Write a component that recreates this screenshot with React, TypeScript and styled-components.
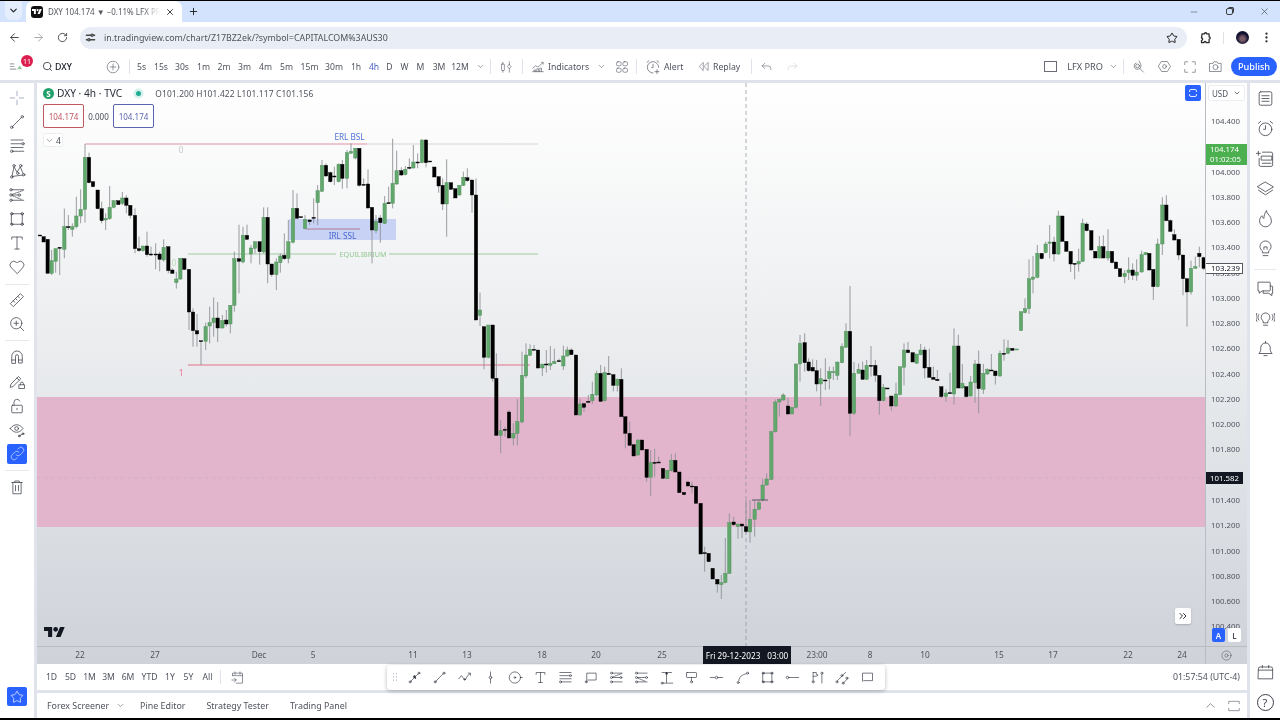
import { FC, ReactNode } from "react";
import styled, { createGlobalStyle } from "styled-components";
import {
  ArrowLeft,
  ArrowRight,
  ChevronDown,
  ChevronUp,
  ChevronsRight,
  EllipsisVertical,
  Minus,
  Plus,
  RotateCw,
  Search,
  Star,
  X,
} from "lucide-react";

const UI_FONT = `"Noto Sans", "Open Sans", sans-serif`;

type Row = number[];

// candles read off the reference at 3x: [x, wickTop, bodyTop, bodyBottom, wickBottom, up]
const seg1: Row[] = [
  [0, 315, 315, 318, 318, 0], [11, 320, 320, 336, 336, 0], [23, 328, 328, 430, 430, 0], [35, 360, 392, 430, 435, 1],
  [47, 356, 356, 394, 428, 1], [59, 352, 352, 354, 435, 0], [73, 236, 290, 358, 385, 1], [85, 255, 290, 293, 300, 0],
  [97, 280, 290, 298, 320, 1], [109, 200, 258, 290, 295, 1], [122, 178, 238, 258, 280, 1], [135, 42, 82, 238, 278, 1],
  [147, 68, 82, 158, 160, 0], [159, 155, 155, 170, 172, 0], [173, 180, 180, 236, 238, 0], [185, 215, 236, 272, 280, 0],
  [197, 250, 265, 270, 300, 1], [209, 168, 232, 266, 270, 1], [221, 212, 212, 232, 235, 1], [235, 212, 212, 224, 224, 0],
  [247, 186, 204, 220, 225, 1], [259, 196, 204, 226, 250, 0], [271, 226, 226, 256, 265, 0], [285, 235, 256, 356, 370, 0],
  [297, 320, 356, 362, 365, 0], [309, 348, 348, 362, 365, 1], [321, 305, 348, 374, 380, 0], [333, 350, 372, 374, 378, 0],
  [347, 340, 372, 373, 418, 0], [359, 365, 372, 388, 424, 0], [371, 328, 352, 390, 395, 1], [385, 350, 350, 422, 430, 0],
  [397, 415, 420, 430, 432, 0], [409, 425, 447, 458, 476, 1], [421, 385, 385, 447, 450, 1], [433, 386, 386, 418, 420, 0],
  [447, 418, 418, 546, 600, 0], [459, 535, 546, 602, 650, 0], [471, 552, 602, 612, 650, 0], [483, 632, 632, 633, 705, 0],
  [497, 578, 590, 634, 660, 1], [509, 530, 578, 588, 640, 1], [521, 502, 564, 578, 620, 1], [533, 516, 564, 594, 636, 0],
  [547, 555, 572, 594, 596, 1], [559, 540, 570, 582, 590, 0], [571, 526, 526, 582, 610, 1], [583, 365, 386, 526, 545, 1],
  [597, 284, 386, 394, 490, 0], [609, 290, 316, 396, 400, 1], [621, 284, 316, 328, 330, 0], [633, 345, 354, 372, 400, 1],
  [645, 335, 335, 355, 370, 1], [659, 335, 335, 365, 404, 0], [671, 232, 262, 366, 370, 1], [683, 232, 262, 402, 460, 0],
  [695, 402, 402, 434, 440, 0], [709, 385, 396, 434, 480, 1], [721, 370, 378, 398, 428, 1], [733, 310, 376, 386, 390, 0],
  [745, 270, 335, 385, 400, 1],
];
const seg2: Row[] = [
  [39, 180, 235, 337, 340, 1], [51, 190, 235, 265, 265, 0], [63, 260, 260, 263, 263, 0], [75, 255, 268, 296, 298, 1],
  [89, 268, 270, 275, 285, 0], [101, 205, 262, 263, 280, 0], [113, 165, 182, 218, 285, 1], [126, 90, 106, 184, 186, 1],
  [138, 100, 106, 138, 140, 0], [151, 125, 128, 155, 158, 0], [163, 110, 138, 139, 165, 0], [176, 100, 103, 155, 157, 1],
  [187, 90, 103, 145, 176, 0], [201, 60, 68, 145, 175, 1], [213, 40, 64, 70, 70, 1], [226, 55, 55, 84, 88, 1],
  [238, 55, 55, 166, 170, 0], [251, 145, 163, 165, 165, 0], [264, 118, 162, 234, 235, 0], [276, 232, 232, 300, 400, 0],
  [288, 255, 274, 302, 310, 1], [301, 255, 264, 278, 338, 0], [314, 198, 220, 280, 282, 1], [326, 170, 218, 219, 220, 0],
  [338, 26, 160, 220, 235, 1], [350, 62, 122, 162, 165, 1], [364, 112, 122, 135, 138, 0], [376, 108, 118, 134, 136, 1],
  [388, 85, 112, 115, 118, 0], [400, 45, 96, 114, 116, 1], [413, 70, 96, 97, 115, 0], [426, 28, 30, 98, 100, 1],
  [438, 28, 30, 98, 112, 0], [450, 93, 93, 95, 95, 0], [463, 111, 111, 141, 142, 0], [476, 140, 140, 168, 188, 0],
  [488, 145, 166, 222, 240, 0], [500, 88, 158, 222, 320, 1], [513, 158, 158, 178, 180, 0], [526, 176, 176, 204, 204, 0],
  [538, 166, 166, 195, 197, 1], [550, 125, 142, 166, 168, 1], [562, 115, 143, 152, 155, 0], [576, 150, 150, 195, 248, 0],
  [588, 145, 195, 570, 570, 0], [600, 488, 540, 556, 588, 1], [612, 590, 590, 682, 718, 0], [625, 585, 585, 682, 685, 1],
  [638, 585, 585, 745, 755, 0],
];
const seg3: Row[] = [
  [79, 160, 235, 406, 408, 0], [92, 360, 392, 406, 460, 1], [105, 380, 388, 390, 410, 0], [117, 330, 336, 414, 416, 0],
  [130, 370, 400, 414, 436, 1], [142, 297, 365, 400, 436, 1], [156, 155, 226, 366, 370, 1], [168, 130, 165, 228, 235, 1],
  [180, 133, 148, 166, 168, 1], [192, 135, 148, 149, 150, 0], [204, 150, 150, 204, 206, 0], [217, 190, 193, 204, 228, 1],
  [229, 150, 192, 194, 218, 0], [241, 138, 190, 196, 210, 1], [253, 146, 184, 191, 191, 1], [267, 176, 182, 184, 185, 0],
  [280, 137, 168, 198, 210, 1], [292, 140, 150, 168, 170, 1], [304, 145, 150, 164, 165, 0], [318, 165, 165, 345, 345, 0],
  [330, 295, 312, 345, 348, 1], [342, 310, 311, 322, 335, 0], [355, 285, 304, 306, 310, 0], [367, 245, 283, 302, 312, 1],
  [380, 212, 220, 285, 290, 1], [392, 195, 220, 304, 306, 0], [404, 200, 218, 302, 305, 1], [416, 168, 220, 224, 225, 0],
  [430, 224, 224, 256, 274, 0], [442, 235, 238, 256, 275, 1], [454, 205, 238, 350, 352, 0], [466, 350, 350, 400, 445, 0],
  [479, 365, 400, 436, 438, 0], [491, 434, 434, 468, 468, 0], [504, 418, 420, 465, 468, 1], [516, 420, 420, 450, 450, 0],
  [530, 448, 448, 532, 545, 0], [542, 450, 488, 532, 588, 1], [554, 446, 487, 489, 530, 0], [566, 470, 486, 488, 490, 0],
  [579, 505, 505, 535, 537, 0], [592, 511, 511, 536, 537, 1], [604, 462, 481, 512, 515, 1], [616, 460, 481, 516, 518, 0],
  [628, 516, 516, 578, 578, 0], [642, 577, 577, 584, 584, 0], [654, 545, 546, 558, 560, 0], [666, 545, 558, 559, 580, 0],
  [678, 559, 559, 610, 610, 0], [692, 610, 610, 762, 762, 0], [704, 740, 758, 759, 815, 0], [716, 760, 760, 785, 785, 0],
  [728, 805, 805, 837, 837, 0], [742, 838, 838, 852, 878, 0], [754, 825, 848, 854, 897, 1], [766, 714, 820, 848, 850, 1],
  [778, 640, 668, 820, 822, 1], [791, 650, 666, 674, 678, 0], [804, 672, 672, 680, 716, 1], [816, 672, 672, 678, 714, 0],
  [828, 600, 680, 695, 700, 0], [840, 600, 658, 696, 728, 1], [854, 600, 628, 658, 710, 1], [867, 600, 608, 628, 630, 1],
  [878, 535, 555, 600, 605, 1], [890, 520, 537, 555, 558, 1],
];
const seg4: Row[] = [
  [34, 725, 725, 868, 870, 1], [46, 628, 636, 725, 728, 1], [58, 625, 628, 636, 680, 1], [70, 610, 615, 630, 632, 1],
  [84, 624, 648, 672, 674, 0], [96, 652, 652, 672, 672, 1], [108, 520, 522, 652, 656, 1], [120, 435, 460, 522, 575, 1],
  [134, 430, 458, 518, 545, 0], [146, 505, 516, 542, 545, 0], [158, 508, 532, 543, 545, 0], [170, 510, 542, 582, 604, 0],
  [182, 535, 566, 582, 648, 1], [196, 505, 570, 571, 600, 0], [208, 530, 545, 566, 598, 1], [220, 530, 545, 546, 570, 1],
  [232, 516, 516, 556, 570, 1], [246, 460, 470, 518, 520, 1], [258, 400, 424, 472, 474, 1], [270, 288, 424, 670, 738, 0],
  [282, 516, 550, 670, 675, 1], [296, 520, 538, 550, 550, 1], [308, 515, 540, 568, 570, 0], [320, 510, 526, 568, 570, 1],
  [333, 468, 526, 527, 560, 0], [346, 510, 526, 556, 575, 0], [358, 556, 556, 632, 674, 0], [370, 582, 592, 632, 634, 1],
  [382, 594, 594, 597, 597, 0], [394, 618, 618, 648, 662, 0], [408, 578, 612, 648, 650, 1], [420, 530, 530, 614, 616, 1],
  [432, 460, 480, 532, 586, 1], [444, 456, 480, 488, 490, 0], [458, 488, 488, 516, 516, 0], [470, 492, 492, 520, 520, 1],
  [482, 462, 480, 494, 496, 1], [494, 470, 480, 534, 565, 0], [508, 476, 532, 562, 564, 0], [520, 530, 562, 568, 568, 0],
  [532, 540, 568, 572, 572, 0], [544, 590, 590, 620, 624, 0], [558, 598, 609, 620, 635, 1], [570, 548, 608, 610, 612, 0],
  [582, 415, 468, 612, 644, 1], [595, 434, 468, 594, 596, 0], [607, 522, 580, 594, 596, 1], [619, 590, 590, 620, 624, 0],
  [632, 558, 576, 618, 620, 1], [645, 510, 522, 578, 638, 1], [656, 482, 522, 596, 670, 0], [670, 522, 550, 598, 612, 1],
  [682, 535, 538, 552, 555, 1], [694, 492, 540, 542, 542, 0], [706, 543, 543, 557, 584, 0], [720, 482, 490, 558, 560, 1],
  [732, 448, 490, 491, 512, 0], [744, 450, 474, 490, 492, 1], [757, 475, 475, 481, 481, 0], [770, 477, 477, 480, 480, 1],
  [783, 365, 365, 422, 422, 1], [795, 325, 356, 368, 370, 1], [807, 208, 266, 356, 372, 1], [819, 198, 261, 268, 310, 1],
  [832, 165, 190, 262, 265, 1], [845, 190, 190, 206, 208, 0], [857, 155, 162, 188, 190, 1], [869, 105, 156, 160, 205, 1],
  [882, 140, 156, 192, 214, 0], [895, 62, 78, 192, 195, 1], [907, 78, 78, 154, 156, 0], [919, 154, 154, 184, 185, 0],
  [932, 184, 184, 222, 246, 0], [944, 220, 220, 221, 268, 0], [956, 176, 214, 222, 245, 1], [968, 86, 100, 214, 216, 1],
  [980, 96, 102, 122, 124, 0], [994, 122, 122, 180, 182, 0], [1006, 184, 184, 204, 204, 0], [1018, 138, 170, 204, 205, 1],
  [1030, 136, 170, 204, 205, 0], [1044, 118, 184, 204, 212, 1], [1056, 184, 184, 218, 220, 0], [1068, 216, 216, 236, 236, 0],
  [1080, 236, 236, 260, 262, 0], [1094, 240, 250, 260, 280, 1], [1106, 202, 240, 248, 270, 1], [1118, 220, 240, 256, 270, 0],
  [1130, 208, 246, 256, 272, 1], [1145, 182, 194, 246, 248, 1], [1157, 186, 188, 194, 196, 1], [1168, 190, 190, 240, 242, 0],
  [1180, 238, 238, 290, 330, 0], [1193, 146, 162, 290, 292, 1], [1207, 22, 45, 162, 195, 1], [1219, 16, 45, 92, 94, 0],
  [1231, 88, 92, 124, 126, 0], [1243, 118, 134, 150, 152, 0], [1256, 148, 148, 195, 210, 0], [1269, 195, 195, 266, 316, 0],
  [1281, 266, 266, 306, 410, 0], [1293, 212, 235, 306, 314, 1], [1306, 200, 230, 235, 236, 1], [1318, 170, 190, 200, 232, 0],
  [1331, 200, 203, 235, 240, 0],
];

const place = (ox: number, oy: number, rows: Row[]) =>
  rows.map(([x, wickTop, top, bottom, wickBottom, up]) => ({
    x: ox + x / 3,
    wickTop: oy + wickTop / 3,
    top: oy + top / 3,
    bottom: oy + bottom / 3,
    wickBottom: oy + wickBottom / 3,
    up: up === 1,
  }));

const candles = [
  ...place(40, 130, seg1),
  ...place(280, 130, seg2),
  ...place(470, 300, seg3),
  ...place(760, 190, seg4),
];

const prices = [
  "104.400", "104.200", "104.000", "103.800", "103.600", "103.400", "103.200", "103.000", "102.800", "102.600", "102.400",
  "102.200", "102.000", "101.800", "101.600", "101.400", "101.200", "101.000", "100.800", "100.600", "100.400",
];

const intervals: [string, number][] = [
  ["5s", 19], ["15s", 20], ["30s", 22], ["1m", 21], ["2m", 20], ["3m", 21], ["4m", 21], ["5m", 21], ["15m", 25], ["30m", 24],
  ["1h", 20], ["4h", 16], ["D", 15], ["W", 15], ["M", 17], ["3M", 20], ["12M", 22],
];

const ranges: [string, number][] = [
  ["1D", 19], ["5D", 19], ["1M", 19], ["3M", 19], ["6M", 20], ["YTD", 23], ["1Y", 18], ["5Y", 19], ["All", 19],
];

const timeLabels: [string, number][] = [
  ["22", 80], ["27", 155], ["Dec", 259], ["5", 313], ["11", 413], ["13", 467], ["18", 542], ["20", 596], ["25", 662],
  ["23:00", 817], ["8", 870], ["10", 925], ["15", 999], ["17", 1053], ["22", 1128], ["24", 1182],
];

const Dot: FC<{ x: number; y: number; r?: number }> = ({ x, y, r = 1.6 }) => <circle cx={x} cy={y} r={r} />;

const Ico: FC<{ size?: number; children: ReactNode }> = ({ size = 18, children }) => (
  <IcoSvg width={size} height={size} viewBox="0 0 24 24">
    {children}
  </IcoSvg>
);

const TvMark: FC<{ width: number; color: string }> = ({ width, color }) => (
  <svg width={width} height={(width * 18) / 36} viewBox="0 4 36 18" fill={color}>
    <path d="M14 22H7V11H0V4h14v18z" />
    <path d="M28 22h-8l7.5-18h8L28 22z" />
    <circle cx="20" cy="8" r="4" />
  </svg>
);

const leftTools: (ReactNode | "divider")[] = [
  <path d="M12 3v6M12 15v6M3 12h6M15 12h6" />,
  <><Dot x={5} y={19} /><Dot x={19} y={5} /><path d="M6.2 17.8 17.8 6.2" /></>,
  <><path d="M4 4h16M4 9h14M4 14h16M7 19h14" /><Dot x={20} y={9} /><Dot x={5} y={19} /></>,
  <><Dot x={5} y={20} /><Dot x={8} y={5} /><Dot x={13} y={15} /><Dot x={17} y={5} /><Dot x={21} y={17} /><path d="M5.4 18.5 8 6.6 12.2 13.6 16.4 6.4 20.2 15.6M6 19.2l14-1.8" /></>,
  <><Dot x={4} y={5} /><Dot x={4} y={12} /><Dot x={4} y={19} /><Dot x={15} y={12} /><path d="M6 5h15M6 12h7M6 19h15" /><path d="M6 11 20 6M6 13l12 5" strokeDasharray="2 1.5" /></>,
  <><rect x="5" y="5" width="14" height="14" /><Dot x={5} y={5} /><Dot x={19} y={5} /><Dot x={5} y={19} /><Dot x={19} y={19} /></>,
  <path d="M5 7V4h14v3M12 4v16M9 20h6" />,
  <path d="M12 20.5 4.2 12.8a4.9 4.9 0 0 1 0-7 5 5 0 0 1 7 0l.8.8.8-.8a5 5 0 0 1 7 0 4.9 4.9 0 0 1 0 7z" />,
  "divider",
  <><path d="M3.5 16.5 16.5 3.5l4 4L7.5 20.5z" /><path d="M7 13l2 2M10 10l2 2M13 7l2 2" /></>,
  <><circle cx="11" cy="11" r="7.5" /><path d="M11 8v6M8 11h6M16.5 16.5 21 21" /></>,
  "divider",
  <path d="M5 20v-9a7 7 0 0 1 14 0v9h-5v-9a2 2 0 0 0-4 0v9zM5 16h5M14 16h5" />,
  <><path d="M3 20l1-4L14 6l3 3L7 19zM12 8l3 3" /><rect x="15" y="17" width="7" height="5" /><path d="M16.5 17v-1.5a2 2 0 0 1 4 0V17" /></>,
  <><rect x="5" y="11" width="14" height="10" rx="1" /><path d="M8 11V7a4 4 0 0 1 7.7-1.5M12 15v2" /></>,
  <><path d="M3 10c3-4 6-5 8.5-5s5.500 1 8.500 5c-3 4-6 5-8.500 5S6 14 3 10z" /><circle cx="11.500" cy="10" r="2.500" /><path d="M15 20l5-3" /><Dot x={15} y={20} r={1.200} /><Dot x={20} y={17} r={1.200} /></>,
  "active",
  "divider",
  <><path d="M5 6h14M9 6V4h6v2M6.500 6v15h11V6M10 10v7M14 10v7" /></>,
];

const linkIcon = (
  <>
    <path d="M10 14a4 4 0 0 0 5.700 0l4-4a4 4 0 0 0-5.700-5.700l-1.500 1.500" />
    <path d="M14 10a4 4 0 0 0-5.700 0l-4 4a4 4 0 0 0 5.700 5.700l1.500-1.500" />
  </>
);

const rightTop: (ReactNode | "divider")[] = [
  <><rect x="4" y="3.500" width="16" height="17" rx="2" /><path d="M7.500 8.500h9M7.500 12h9M7.500 15.500h9" /></>,
  <><circle cx="12" cy="13" r="8" /><path d="M12 8.500V13H9.500M3 5.500 6 3M21 5.500 18 3" /></>,
  <><path d="M3 3v5M.5 5.500h5" /><path d="M8 4h11a2 2 0 0 1 2 2v14a2 2 0 0 1-2 2H6a2 2 0 0 1-2-2v-8" /><path d="M7 9h13v5H7zM8 18h11" /></>,
  <><path d="M12 4 22 10 12 16 2 10zM3 14l9 6 9-6" /></>,
  <path d="M13 2.500c.5 4 6.500 6 6.500 12.500a7.500 7.500 0 0 1-15 0c0-3 1.500-5 3-6.500.5 2 1.500 3 2.500 3.500 0-3.500 1-7 3-9.500z" />,
  <><path d="M8 17v-2c-2-1.500-3-3.500-3-5.500a7 7 0 0 1 14 0c0 2-1 4-3 5.500v2zM9 21h6M10 13V10h4v3" /></>,
  "divider",
  <><path d="M3 4h14a1 1 0 0 1 1 1v9a1 1 0 0 1-1 1H8l-4 3v-3H3z" /><path d="M18 9h2a1 1 0 0 1 1 1v8h-1v3l-4-3H9v-3" /></>,
  <><path d="M9 17v-2c-1.500-1-2.500-2.800-2.500-4.500a5.500 5.500 0 0 1 11 0c0 1.700-1 3.500-2.500 4.500v2zM9.500 20.500h5M3.500 7c-1.500 2-1.500 5 0 7M1 5.500c-1.500 3-1.500 7 0 10M20.500 7c1.500 2 1.500 5 0 7M23 5.500c1.500 3 1.500 7 0 10" /></>,
  <><path d="M4 18c2-2 2-4 2-7a6 6 0 0 1 12 0c0 3 0 5 2 7zM10 21h4M12 3v2" /></>,
];

const drawTools: ReactNode[] = [
  <><Dot x={5} y={19} /><Dot x={19} y={5} /><path d="M6 18 18 6" /><path d="M10 11l4 3-1.200-5z" fill="#131722" /></>,
  <><Dot x={5} y={19} /><Dot x={19} y={5} /><path d="M6 18 18 6" /></>,
  <><path d="M3 14l4-5 4 5 2 2 4-7 4-3" /><Dot x={12} y={15} r={1.300} /><path d="M18 5h3.500v3.500" /></>,
  <><path d="M12 3v6.500M12 14.500V21" /><Dot x={12} y={12} r={2} /></>,
  <><circle cx="11" cy="12" r="9" /><Dot x={11} y={12} r={1.300} /><path d="M20 12l3 0" /></>,
  <path d="M5 7V4h14v3M12 4v16M9 20h6" />,
  <><path d="M3 4h18M3 9h15M3 14h18M6 19h15" /><Dot x={20} y={9} /><Dot x={4} y={19} /></>,
  <><path d="M6 18V5h15v11H8" /><Dot x={5} y={19} /></>,
  <><Dot x={4} y={5} /><Dot x={4} y={12} /><Dot x={4} y={19} /><Dot x={19} y={12} /><path d="M6 5h15M6 12h11M6 19h15" /><path d="M6 11 20 6" strokeDasharray="2 1.500" /></>,
  <><Dot x={4} y={5} /><Dot x={4} y={12} /><Dot x={4} y={19} /><Dot x={20} y={12} /><path d="M6 5h15M6 12h12M6 19h15" /><path d="M6 13l12 5" strokeDasharray="2 1.500" /></>,
  <><path d="M5 4h15M12 4v16M7 21h15" /><Dot x={5} y={21} /><path d="M12 4l-1.500 2.500h3z" fill="#131722" /></>,
  <><rect x="4" y="4" width="16" height="8" rx="1" /><path d="M12 12v5" /><Dot x={12} y={19} /></>,
  <><path d="M2 12h7M15 12h7" /><Dot x={12} y={12} r={2} /></>,
  <><path d="M6 17C7 10 11 8 18 6" /><Dot x={5} y={20} /><Dot x={20} y={5} /></>,
  <><rect x="5" y="5" width="14" height="14" /><Dot x={5} y={5} /><Dot x={19} y={5} /><Dot x={5} y={19} /><Dot x={19} y={19} /></>,
  <><Dot x={4} y={12} r={2} /><path d="M7 12h15" /></>,
  <><path d="M5 4v13M5 4h5v3l3 1-3 2H5" /><Dot x={5} y={19} /><path d="M19 7v14" /><Dot x={19} y={5} /></>,
  <><path d="M4 17l6-6M14 20l6-6M11 9l6-5" /><Dot x={3} y={19} /><Dot x={11} y={9} /><Dot x={13} y={21} /><Dot x={19} y={13} /></>,
  <path d="M4 18V5h16v12H6" />,
];

const Chart: FC = () => (
  <ChartSvg viewBox="37 83 1168 563">
    <rect x="37" y="397" width="1168" height="130" fill="#e3b5cc" />
    <line x1="37" y1="478" x2="1205" y2="478" stroke="#a9acb4" strokeOpacity="0.35" strokeDasharray="3 4" />
    <line x1="746" y1="83" x2="746" y2="646" stroke="#8d9097" strokeOpacity="0.7" strokeDasharray="4 3" />

    <line x1="85" y1="144" x2="367" y2="144" stroke="#e8b4c0" strokeWidth="1.600" />
    <line x1="367" y1="144" x2="538" y2="144" stroke="#e2e2e4" strokeWidth="1.600" />
    <line x1="188" y1="254" x2="336" y2="254" stroke="#a0cba0" />
    <line x1="389" y1="254" x2="538" y2="254" stroke="#a0cba0" />
    <line x1="188" y1="365" x2="530" y2="365" stroke="#e4708a" strokeWidth="1.100" />
    <rect x="289" y="219" width="107" height="21" fill="#c7d2f5" />
    <line x1="306" y1="229" x2="360" y2="229" stroke="#b07a9a" />

    <ChartLabel x="181" y="153" fill="#c4c6cb">0</ChartLabel>
    <ChartLabel x="174" y="266" fill="#bcd8bc">0</ChartLabel>
    <ChartLabel x="181" y="376" fill="#ea6a94">1</ChartLabel>
    <ChartLabel x="349.500" y="140" fill="#4f70d6">ERL BSL</ChartLabel>
    <ChartLabel x="342.500" y="239" fill="#4a68d0">IRL SSL</ChartLabel>
    <ChartLabel x="363" y="257" fill="#93c893" $size={7.2}>EQUILIBRIUM</ChartLabel>

    {candles.map((c, i) => (
      <g key={i}>
        <line x1={c.x} y1={c.wickTop} x2={c.x} y2={c.wickBottom} stroke="#8f9296" strokeWidth="0.900" />
        <rect
          x={c.x - 1.7}
          y={c.top}
          width="3.400"
          height={Math.max(c.bottom - c.top, 1)}
          fill={c.up ? "#62a86d" : "#000"}
          stroke={c.up ? "#4a8a55" : "#000"}
          strokeWidth="0.400"
        />
      </g>
    ))}
    <line x1="752" y1="500" x2="768" y2="500" stroke="#55585f" />
  </ChartSvg>
);

export default function App() {
  return (
    <>
      <GlobalStyle />
      <Page>
        <TabStrip>
          <TabMenu>
            <ChevronDown size={11} strokeWidth={2.4} />
          </TabMenu>
          <Tab>
            <Favicon>
              <TvMark width={10} color="#fff" />
            </Favicon>
            <TabTitle>DXY 104.174 ▼ −0.11% LFX PRO</TabTitle>
            <X size={10} strokeWidth={2} />
          </Tab>
          <NewTab>
            <Plus size={11} strokeWidth={2} />
          </NewTab>
          <WindowControls>
            <Minus size={10} strokeWidth={1.2} />
            <RestoreIcon />
            <X size={11} strokeWidth={1.4} />
          </WindowControls>
        </TabStrip>

        <AddressRow>
          <NavIcon>
            <ArrowLeft size={13} strokeWidth={1.8} />
          </NavIcon>
          <NavIcon $muted>
            <ArrowRight size={13} strokeWidth={1.8} />
          </NavIcon>
          <NavIcon>
            <RotateCw size={11} strokeWidth={2} />
          </NavIcon>
          <Omnibox>
            <Ico size={11}>
              <path d="M3 7h10M18 7h3M3 17h3M11 17h10" strokeWidth="3" />
              <circle cx="15.500" cy="7" r="2.500" strokeWidth="2.500" />
              <circle cx="8.500" cy="17" r="2.500" strokeWidth="2.500" />
            </Ico>
            <UrlText>in.tradingview.com/chart/Z17BZ2ek/?symbol=CAPITALCOM%3AUS30</UrlText>
            <Star size={12} strokeWidth={2} color="#1f1f1f" />
          </Omnibox>
          <BrowserActions>
            <Ico size={14}>
              <path d="M7 5h4a2 2 0 0 1 4 0h4v5a2 2 0 0 1 0 4v6h-5a2 2 0 0 0-4 0H6v-4a2 2 0 0 0 0-4z" strokeWidth="2.200" />
            </Ico>
            <BrowserDivider />
            <Avatar />
            <EllipsisVertical size={13} strokeWidth={2.2} />
          </BrowserActions>
        </AddressRow>

        <TvToolbar>
          <AppThumb>
            <svg width="16" height="9" viewBox="0 0 18 10">
              <path d="M1 2h5M1 5h5M1 8h7" stroke="#a3a8ae" strokeWidth="1.300" />
              <path d="M9 8l3-4 3 4z" fill="#9cc7a3" />
            </svg>
            <Badge>11</Badge>
          </AppThumb>
          <SymbolSearch>
            <Search size={11} strokeWidth={1.6} />
            <SymbolName>DXY</SymbolName>
          </SymbolSearch>
          <CompareButton>
            <Ico size={14}>
              <circle cx="12" cy="12" r="10" />
              <path d="M12 7v10M7 12h10" />
            </Ico>
          </CompareButton>
          <ToolDivider />
          <IntervalList>
            {intervals.map(([label, w]) => (
              <Interval key={label} $w={w} $active={label === "4h"}>
                {label}
              </Interval>
            ))}
          </IntervalList>
          <ChevronSlot>
            <ChevronDown size={9} strokeWidth={1.4} />
          </ChevronSlot>
          <ToolDivider />
          <IconSlot $w={31}>
            <Ico size={14}>
              <path d="M5 4v3M5 18v3M16 3v5M16 15v6" />
              <rect x="2.500" y="7" width="5" height="11" rx="1" />
              <path d="M16 8l3 3.500-3 3.500-3-3.500z" />
            </Ico>
          </IconSlot>
          <ToolDivider />
          <LabelButton $w={72}>
            <Ico size={14}>
              <path d="M3 14l5-4 4 2 8-7M18 4h3v3M3 20h18M5 20v-3h3v3M10 20v-5h3v5M15 20v-6h3v6" />
            </Ico>
            Indicators
          </LabelButton>
          <ChevronSlot $w={12}>
            <ChevronDown size={9} strokeWidth={1.4} />
          </ChevronSlot>
          <IconSlot $w={29}>
            <Ico size={14}>
              <rect x="2.500" y="3" width="8" height="7" rx="2.500" />
              <rect x="13.500" y="3" width="8" height="7" rx="2.500" />
              <rect x="2.500" y="14" width="8" height="7" rx="2.500" />
              <rect x="13.500" y="14" width="8" height="7" rx="2.500" />
            </Ico>
          </IconSlot>
          <ToolDivider />
          <LabelButton $w={52}>
            <Ico size={16}>
              <path d="M12 21a8.500 8.500 0 1 1 8.500-8.500M3 5l3-2.500M21 5l-3-2.500M12 8v5h-2M18 16v6M15 19h6" />
            </Ico>
            Alert
          </LabelButton>
          <LabelButton $w={62}>
            <Ico size={13}>
              <path d="M11 5 4 12l7 7zM20 5l-7 7 7 7z" />
            </Ico>
            Replay
          </LabelButton>
          <ToolDivider />
          <IconSlot $w={29}>
            <Ico size={13}>
              <path d="M9 6 4 11l5 5M4 11h11a5 5 0 0 1 5 5v2" />
            </Ico>
          </IconSlot>
          <IconSlot $w={22} $muted>
            <Ico size={13}>
              <path d="M15 6l5 5-5 5M20 11H9a5 5 0 0 0-5 5v2" />
            </Ico>
          </IconSlot>

          <ToolbarRight>
            <LayoutSquare />
            <LayoutName>LFX PRO</LayoutName>
            <ChevronSlot $w={20}>
              <ChevronDown size={9} strokeWidth={1.4} />
            </ChevronSlot>
            <ToolDivider />
            <IconSlot $w={28}>
              <Ico size={15}>
                <path d="M13 3c.5 3 3 4 3 8a5.500 5.500 0 1 1-8-4.800M14.500 15.500 20 21" />
                <circle cx="10.500" cy="11" r="3" />
              </Ico>
            </IconSlot>
            <IconSlot $w={25}>
              <Ico size={15}>
                <path d="M7.500 4h9l5 8-5 8h-9l-5-8z" />
                <circle cx="12" cy="12" r="3" />
              </Ico>
            </IconSlot>
            <IconSlot $w={26}>
              <Ico size={14}>
                <path d="M3 8V3h5M16 3h5v5M21 16v5h-5M8 21H3v-5" />
              </Ico>
            </IconSlot>
            <IconSlot $w={25}>
              <Ico size={15}>
                <path d="M3 7h5l1.500-2.500h5L16 7h5v13H3z" />
                <circle cx="12" cy="13" r="4" />
              </Ico>
            </IconSlot>
            <Publish>Publish</Publish>
          </ToolbarRight>
        </TvToolbar>

        <Workspace>
          <LeftRail>
            {leftTools.map((tool, i) =>
              tool === "divider" ? (
                <RailDivider key={i} />
              ) : tool === "active" ? (
                <RailButton key={i} $active>
                  <Ico size={17}>{linkIcon}</Ico>
                </RailButton>
              ) : (
                <RailButton key={i} $soft={i === 0}>
                  <Ico size={18}>{tool}</Ico>
                </RailButton>
              ),
            )}
            <FavouriteButton>
              <Star size={14} strokeWidth={1.5} />
            </FavouriteButton>
          </LeftRail>

          <Center>
            <ChartArea>
              <ChartPane>
                <Chart />
                <Legend>
                  <LegendTitle>
                    <SymbolBadge>S</SymbolBadge>
                    DXY · 4h · TVC
                    <StatusDot />
                    <Ohlc>O101.200 H101.422 L101.117 C101.156</Ohlc>
                  </LegendTitle>
                  <Quotes>
                    <Quote $color="#c2565f">104.174</Quote>
                    <Spread>0.000</Spread>
                    <Quote $color="#5a64b0">104.174</Quote>
                  </Quotes>
                  <Collapse>
                    <ChevronDown size={9} strokeWidth={1.4} />4
                  </Collapse>
                </Legend>
                <SyncButton>
                  <Ico size={12}>
                    <path d="M5 9V8a3 3 0 0 1 3-3h8a3 3 0 0 1 3 3v1M19 15v1a3 3 0 0 1-3 3H8a3 3 0 0 1-3-3v-1" strokeWidth="2" />
                  </Ico>
                </SyncButton>
                <Watermark>
                  <TvMark width={21} color="#131722" />
                </Watermark>
                <ScrollButton>
                  <ChevronsRight size={12} strokeWidth={1.8} />
                </ScrollButton>
              </ChartPane>
              <PriceAxis>
                {prices.map((p) => (
                  <PriceLabel key={p}>{p}</PriceLabel>
                ))}
                <CurrencySelect>
                  USD
                  <ChevronDown size={8} strokeWidth={2.4} />
                </CurrencySelect>
                <LastPrice>
                  104.174
                  <br />
                  01:02:05
                </LastPrice>
                <CursorTag>103.239</CursorTag>
                <CrosshairTag>101.582</CrosshairTag>
                <ScaleButton $active>A</ScaleButton>
                <ScaleButton $second>L</ScaleButton>
              </PriceAxis>
              <TimeAxis>
                {timeLabels.map(([label, x]) => (
                  <TimeLabel key={label + x} $x={x - 37}>
                    {label}
                  </TimeLabel>
                ))}
                <TimeCursor>
                  <span>Fri 29-12-2023</span>
                  <span>03:00</span>
                </TimeCursor>
              </TimeAxis>
              <AxisCorner>
                <Ico size={13}>
                  <circle cx="12" cy="12" r="8.500" />
                  <circle cx="12" cy="12" r="3" />
                </Ico>
              </AxisCorner>
            </ChartArea>

            <RangeBar>
              {ranges.map(([label, w]) => (
                <RangeItem key={label} $w={w}>
                  {label}
                </RangeItem>
              ))}
              <RangeDivider />
              <Ico size={15}>
                <path d="M4 9V5h16v16H10M8 3v4M16 3v4M4 9h16M3 16h7M7 13l3 3-3 3" />
              </Ico>
              <Clock>01:57:54 (UTC-4)</Clock>
            </RangeBar>

            <BottomPanel>
              <PanelTab $menu>
                Forex Screener
                <ChevronDown size={9} strokeWidth={1.4} />
              </PanelTab>
              <PanelTab>Pine Editor</PanelTab>
              <PanelTab>Strategy Tester</PanelTab>
              <PanelTab>Trading Panel</PanelTab>
              <PanelActions>
                <ChevronUp size={15} strokeWidth={1} />
                <Ico size={14}>
                  <path d="M3 8V4h18v4M3 16v4h18v-4" />
                </Ico>
              </PanelActions>
            </BottomPanel>

            <DrawingBar>
              <Grip />
              {drawTools.map((tool, i) => (
                <DrawCell key={i}>
                  <Ico size={15}>{tool}</Ico>
                </DrawCell>
              ))}
            </DrawingBar>
          </Center>

          <RightRail>
            {rightTop.map((tool, i) =>
              tool === "divider" ? (
                <RailDivider key={i} $tight />
              ) : (
                <RightButton key={i}>
                  <Ico size={19}>{tool}</Ico>
                </RightButton>
              ),
            )}
            <RightFoot>
              <RightButton>
                <Ico size={19}>
                  <path d="M3 7a2 2 0 0 1 2-2h14a2 2 0 0 1 2 2v13H3zM3 9h18M8 3v3M16 3v3" />
                </Ico>
              </RightButton>
              <RightButton>
                <HelpBadge>?</HelpBadge>
              </RightButton>
            </RightFoot>
          </RightRail>
        </Workspace>
      </Page>
    </>
  );
}

const GlobalStyle = createGlobalStyle`
  html, body {
    margin: 0;
    padding: 0;
    background: #000;
    overflow: hidden;
  }
  * {
    box-sizing: border-box;
  }
`;

const Page = styled.div`
  width: 1280px;
  height: 720px;
  padding-top: 1px;
  display: flex;
  flex-direction: column;
  overflow: hidden;
  background: #000;
  font-family: ${UI_FONT};
  color: #4a4e59;
  filter: blur(0.3px);
`;

const IcoSvg = styled.svg`
  flex: none;
  fill: none;
  stroke: currentColor;
  stroke-width: 1;
  stroke-linecap: round;
  stroke-linejoin: round;
`;

/* browser chrome */
const TabStrip = styled.div`
  height: 21px;
  flex: none;
  display: flex;
  align-items: stretch;
  background: #d3e3fd;
  color: #1f1f1f;
`;
const TabMenu = styled.div`
  width: 17px;
  margin: 0 4px 2px 5px;
  display: flex;
  align-items: center;
  justify-content: center;
  border-radius: 0 0 6px 6px;
  background: #e4eefd;
`;
const Tab = styled.div`
  width: 156px;
  display: flex;
  align-items: center;
  padding: 0 7px 0 5px;
  background: #fff;
  border-radius: 7px 7px 0 0;
`;
const Favicon = styled.div`
  width: 12px;
  height: 12px;
  flex: none;
  display: flex;
  align-items: center;
  justify-content: center;
  border-radius: 3px;
  background: #111;
`;
const TabTitle = styled.div`
  flex: 1;
  min-width: 0;
  margin: 0 5px;
  overflow: hidden;
  white-space: nowrap;
  font-size: 8px;
  color: #55585e;
  -webkit-mask-image: linear-gradient(90deg, #000 85%, transparent);
`;
const NewTab = styled.div`
  width: 22px;
  display: flex;
  align-items: center;
  justify-content: center;
`;
const WindowControls = styled.div`
  margin-left: auto;
  width: 81px;
  margin-right: 10px;
  display: flex;
  align-items: center;
  justify-content: space-between;
  color: #3c4043;
`;
const RestoreIcon = styled.div`
  width: 7px;
  height: 7px;
  border: 1px solid #3c4043;
  border-radius: 2px;
  box-shadow: 1.5px -1.5px 0 -0.5px #3c4043;
`;
const AddressRow = styled.div`
  height: 31px;
  flex: none;
  display: flex;
  align-items: center;
  padding-left: 2px;
  background: #fff;
  color: #474747;
`;
const NavIcon = styled.div<{ $muted?: boolean }>`
  width: 24px;
  display: flex;
  justify-content: center;
  color: ${(p) => (p.$muted ? "#a9abae" : "#474747")};
`;
const Omnibox = styled.div`
  width: 1107px;
  height: 22px;
  margin-left: 6px;
  padding: 0 9px 0 5px;
  display: flex;
  align-items: center;
  gap: 8px;
  border-radius: 11px;
  background: #e9eef6;
`;
const UrlText = styled.div`
  flex: 1;
  font-size: 8.85px;
  color: #4f5257;
`;
const BrowserActions = styled.div`
  flex: 1;
  padding: 0 7px 0 11px;
  display: flex;
  align-items: center;
  justify-content: space-between;
  color: #2b2b2b;
`;
const BrowserDivider = styled.div`
  width: 1px;
  height: 12px;
  background: #dfe1e5;
`;
const Avatar = styled.div`
  width: 13px;
  height: 13px;
  border-radius: 50%;
  background: radial-gradient(circle at 50% 60%, #7a5a66 0 20%, #0f1030 55%);
`;

/* chart toolbar */
const TvToolbar = styled.div`
  height: 27px;
  flex: none;
  display: flex;
  align-items: center;
  background: #fff;
  font-size: 9.2px;
  color: #50535e;
`;
const AppThumb = styled.div`
  position: relative;
  width: 38px;
  padding-left: 9px;
  display: flex;
  align-items: center;
`;
const Badge = styled.span`
  position: absolute;
  left: 21px;
  top: -7px;
  width: 12px;
  height: 12px;
  display: flex;
  align-items: center;
  justify-content: center;
  border-radius: 50%;
  background: #dc1f4e;
  color: #fff;
  font-size: 7px;
`;
const SymbolSearch = styled.div`
  width: 65px;
  padding-left: 4px;
  display: flex;
  align-items: center;
  gap: 2px;
  color: #131722;
`;
const SymbolName = styled.span`
  font-weight: 500;
  font-size: 8.8px;
`;
const CompareButton = styled.div`
  width: 26px;
  padding-right: 6px;
  display: flex;
  justify-content: center;
`;
const ToolDivider = styled.div`
  width: 1px;
  height: 15px;
  flex: none;
  background: #e0e3eb;
`;
const IntervalList = styled.div`
  display: flex;
  padding-left: 2px;
`;
const Interval = styled.div<{ $w: number; $active?: boolean }>`
  width: ${(p) => p.$w}px;
  text-align: center;
  font-size: 8.6px;
  color: ${(p) => (p.$active ? "#4a62c8" : "#50535e")};
`;
const ChevronSlot = styled.div<{ $w?: number }>`
  width: ${(p) => p.$w ?? 19}px;
  flex: none;
  display: flex;
  justify-content: center;
`;
const IconSlot = styled.div<{ $w: number; $muted?: boolean }>`
  width: ${(p) => p.$w}px;
  flex: none;
  display: flex;
  justify-content: center;
  color: ${(p) => (p.$muted ? "#c4c7cf" : "#50535e")};
`;
const LabelButton = styled.div<{ $w: number }>`
  width: ${(p) => p.$w}px;
  flex: none;
  padding-left: 8px;
  display: flex;
  align-items: center;
  gap: 3px;
  font-size: 8.7px;
`;
const ToolbarRight = styled.div`
  margin-left: auto;
  padding-right: 3px;
  display: flex;
  align-items: center;
`;
const LayoutSquare = styled.div`
  width: 13px;
  height: 11px;
  margin-right: 10px;
  border: 1px solid #6a6d78;
`;
const LayoutName = styled.div`
  font-size: 9.2px;
`;
const Publish = styled.div`
  width: 46px;
  height: 19px;
  margin-left: 3px;
  display: flex;
  align-items: center;
  justify-content: center;
  border-radius: 10px;
  background: #2962ff;
  color: #fff;
  font-size: 9.2px;
  font-weight: 500;
`;

/* workspace */
const Workspace = styled.div`
  flex: 1;
  min-height: 0;
  margin-bottom: 2px;
  padding-top: 3px;
  display: grid;
  grid-template-columns: 34px 1210px 30px;
  grid-template-rows: 635px;
  column-gap: 3px;
  background: #e0e3eb;
`;
const LeftRail = styled.div`
  display: flex;
  flex-direction: column;
  align-items: center;
  padding-top: 3px;
  background: #fff;
  color: #3d404a;
`;
const RailButton = styled.div<{ $active?: boolean; $soft?: boolean }>`
  width: 20px;
  height: ${(p) => (p.$active ? 20 : 24.2)}px;
  margin: ${(p) => (p.$active ? "2px 0" : "0")};
  flex: none;
  display: flex;
  align-items: center;
  justify-content: center;
  border-radius: 2px;
  background: ${(p) => (p.$active ? "#2962ff" : "transparent")};
  color: ${(p) => (p.$active ? "#cfdcff" : p.$soft ? "#8c94b4" : "inherit")};
`;
const RailDivider = styled.div<{ $tight?: boolean }>`
  width: ${(p) => (p.$tight ? 22 : 24)}px;
  height: 1px;
  margin: ${(p) => (p.$tight ? "6px 0 3px" : "4px 0 3.600px")};
  flex: none;
  background: #e6e8ee;
`;
const FavouriteButton = styled.div`
  width: 20px;
  height: 19px;
  margin-top: auto;
  margin-bottom: 12px;
  display: flex;
  align-items: center;
  justify-content: center;
  border-radius: 2px;
  background: #2962ff;
  color: #d5e0ff;
`;
const Center = styled.div`
  position: relative;
  display: grid;
  grid-template-rows: 581px 26px 28px;
  align-content: start;
`;
const ChartArea = styled.div`
  display: grid;
  grid-template-columns: 1168px 42px;
  grid-template-rows: 563px 18px;
  background: linear-gradient(180deg, #ffffff 0%, #f2f3f4 30%, #e2e5e8 62%, #d2d5db 92%, #cfd2d9 100%);
`;
const ChartPane = styled.div`
  position: relative;
  overflow: hidden;
`;
const ChartSvg = styled.svg`
  position: absolute;
  inset: 0;
  width: 1168px;
  height: 563px;
`;
const ChartLabel = styled.text<{ $size?: number }>`
  font-family: ${UI_FONT};
  font-size: ${(p) => p.$size ?? 8.2}px;
  text-anchor: middle;
`;
const Legend = styled.div`
  position: relative;
  padding: 3px 0 0 6px;
  display: flex;
  flex-direction: column;
  align-items: flex-start;
`;
const LegendTitle = styled.div`
  height: 14px;
  display: flex;
  align-items: center;
  font-size: 10.2px;
  color: #2a2e39;
`;
const SymbolBadge = styled.span`
  width: 11px;
  height: 11px;
  margin-right: 3px;
  display: flex;
  align-items: center;
  justify-content: center;
  border-radius: 50%;
  background: #22a06b;
  color: #fff;
  font-size: 8px;
  font-weight: 700;
`;
const StatusDot = styled.span`
  width: 5px;
  height: 5px;
  margin: 0 14px;
  border-radius: 50%;
  background: #22ab94;
  box-shadow: 0 0 0 2.500px #d5f1ec;
`;
const Ohlc = styled.span`
  font-size: 8.4px;
  letter-spacing: 0.15px;
  color: #50535e;
`;
const Quotes = styled.div`
  margin-top: 4px;
  display: flex;
  align-items: center;
`;
const Quote = styled.div<{ $color: string }>`
  width: 41px;
  height: 24px;
  display: flex;
  align-items: center;
  justify-content: center;
  border: 1px solid ${(p) => p.$color};
  border-radius: 2px;
  background: #fff;
  color: ${(p) => p.$color};
  font-size: 8px;
`;
const Spread = styled.div`
  width: 29px;
  text-align: center;
  font-size: 8px;
`;
const Collapse = styled.div`
  width: 20px;
  height: 14px;
  margin-top: 5px;
  display: flex;
  align-items: center;
  justify-content: center;
  gap: 2px;
  border: 1px solid #eceef2;
  border-radius: 2px;
  background: #fff;
  font-size: 8.5px;
`;
const SyncButton = styled.div`
  position: absolute;
  right: 4px;
  top: 2px;
  width: 16px;
  height: 16px;
  display: flex;
  align-items: center;
  justify-content: center;
  border-radius: 2px;
  background: #2962ff;
  color: #e4ebff;
`;
const Watermark = styled.div`
  position: absolute;
  left: 7px;
  bottom: 9px;
  line-height: 0;
`;
const ScrollButton = styled.div`
  position: absolute;
  right: 14px;
  bottom: 22px;
  width: 16px;
  height: 16px;
  display: flex;
  align-items: center;
  justify-content: center;
  border-radius: 2px;
  background: #fff;
  color: #131722;
  box-shadow: 0 1px 2px rgba(0, 0, 0, 0.2);
`;
const PriceAxis = styled.div`
  position: relative;
  padding-top: 26px;
  display: flex;
  flex-direction: column;
  overflow: hidden;
  border-left: 1px solid #b9bcc3;
`;
const PriceLabel = styled.div`
  height: 25.270px;
  flex: none;
  padding-left: 5px;
  line-height: 25.270px;
  font-size: 7.800px;
  color: #50535e;
`;
const CurrencySelect = styled.div`
  position: absolute;
  left: 2px;
  top: 2px;
  width: 37px;
  height: 16px;
  padding: 0 3px;
  display: flex;
  align-items: center;
  justify-content: space-between;
  border: 1px solid #eceef2;
  border-radius: 2px;
  background: #fff;
  font-size: 8px;
  color: #50535e;
`;
const LastPrice = styled.div`
  position: absolute;
  left: -1px;
  top: 61px;
  width: 42px;
  height: 21px;
  padding-left: 5px;
  background: #4caf50;
  color: #fff;
  font-size: 7.800px;
  line-height: 10px;
`;
const CursorTag = styled.div`
  position: absolute;
  left: -1px;
  top: 180px;
  width: 38px;
  height: 11px;
  padding-left: 5px;
  border: 1px solid #55585f;
  background: #fff;
  color: #131722;
  font-size: 7.800px;
  line-height: 9px;
`;
const CrosshairTag = styled.div`
  position: absolute;
  left: -1px;
  top: 389px;
  width: 38px;
  height: 12px;
  padding-left: 5px;
  background: #131722;
  color: #fff;
  font-size: 7.800px;
  line-height: 12px;
`;
const ScaleButton = styled.div<{ $active?: boolean; $second?: boolean }>`
  position: absolute;
  left: ${(p) => (p.$second ? 22 : 6)}px;
  top: 545px;
  width: 13px;
  height: 14px;
  display: flex;
  align-items: center;
  justify-content: center;
  border-radius: 2px;
  background: ${(p) => (p.$active ? "#2962ff" : "#fff")};
  color: ${(p) => (p.$active ? "#fff" : "#50535e")};
  font-size: 8px;
  font-weight: 600;
`;
const TimeAxis = styled.div`
  position: relative;
  border-top: 1px solid #b9bcc3;
`;
const TimeLabel = styled.div.attrs<{ $x: number }>((p) => ({ style: { left: p.$x } }))<{ $x: number }>`
  position: absolute;
  top: 0;
  transform: translateX(-50%);
  font-size: 8.300px;
  line-height: 16px;
  color: #50535e;
`;
const TimeCursor = styled.div`
  position: absolute;
  left: 666px;
  top: -1px;
  width: 88px;
  height: 18px;
  display: flex;
  align-items: center;
  justify-content: center;
  gap: 7px;
  white-space: nowrap;
  background: #131722;
  color: #fff;
  font-size: 8.200px;
`;
const AxisCorner = styled.div`
  display: flex;
  align-items: center;
  justify-content: center;
  border-top: 1px solid #b9bcc3;
  border-left: 1px solid #b9bcc3;
  color: #50535e;
`;
const RangeBar = styled.div`
  padding: 0 7px 0 5px;
  display: flex;
  align-items: center;
  background: #fff;
  font-size: 8.600px;
  color: #50535e;
`;
const RangeItem = styled.div<{ $w: number }>`
  width: ${(p) => p.$w}px;
  text-align: center;
`;
const RangeDivider = styled.div`
  width: 1px;
  height: 14px;
  margin: 0 9px 0 3px;
  background: #e0e3eb;
`;
const Clock = styled.div`
  margin-left: auto;
  font-size: 8.800px;
`;
const BottomPanel = styled.div`
  margin-top: 3px;
  height: 25px;
  padding: 0 4px 0 10px;
  display: flex;
  align-items: center;
  gap: 21px;
  background: #fff;
  font-size: 8.900px;
  color: #50535e;
`;
const PanelTab = styled.div<{ $menu?: boolean }>`
  display: flex;
  align-items: center;
  gap: 7px;
  margin-right: ${(p) => (p.$menu ? -6 : 0)}px;
`;
const PanelActions = styled.div`
  margin-left: auto;
  display: flex;
  align-items: center;
  gap: 9px;
  padding-right: 2px;
`;
const DrawingBar = styled.div`
  position: absolute;
  left: 350px;
  top: 582px;
  width: 498px;
  height: 25px;
  padding-left: 15px;
  display: flex;
  align-items: center;
  border-radius: 4px;
  background: #fff;
  box-shadow: 0 1px 4px rgba(0, 0, 0, 0.28);
  color: #2a2e39;
`;
const Grip = styled.div`
  position: absolute;
  left: 5px;
  top: 7px;
  width: 6px;
  height: 10px;
  background-image: radial-gradient(circle, #c4c7cf 0.7px, transparent 0.8px);
  background-size: 3px 3.300px;
`;
const DrawCell = styled.div`
  width: 25.200px;
  flex: none;
  display: flex;
  justify-content: center;
`;
const RightRail = styled.div`
  display: flex;
  flex-direction: column;
  align-items: center;
  background: #fff;
  color: #3d404a;
`;
const RightButton = styled.div`
  height: 30px;
  flex: none;
  display: flex;
  align-items: center;
  justify-content: center;
`;
const HelpBadge = styled.div`
  width: 17px;
  height: 17px;
  display: flex;
  align-items: center;
  justify-content: center;
  border: 1px solid #3d404a;
  border-radius: 50%;
  font-size: 11px;
  line-height: 1;
  color: #3d404a;
`;
const RightFoot = styled.div`
  margin-top: auto;
  padding-bottom: 1px;
`;
